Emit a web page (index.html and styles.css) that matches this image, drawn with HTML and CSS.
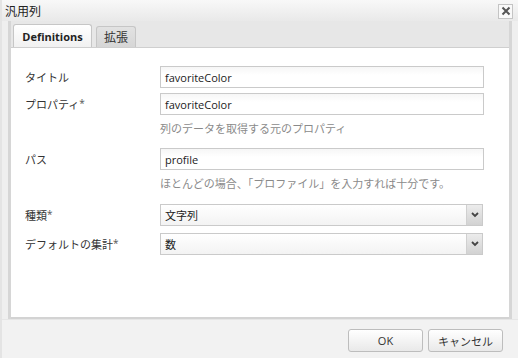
FILE: index.html
```html
<!DOCTYPE html>
<html lang="ja">
<head>
  <meta charset="UTF-8">
  <title>汎用列</title>
  <link rel="stylesheet" href="styles.css">
</head>
<body>

  <div class="window">
    <!-- Title bar -->
    <div class="titlebar">
      <span class="title">汎用列</span>
      <span class="close">
        <svg width="10" height="10" viewBox="0 0 10 10">
          <path d="M1.5 1.5 L8.5 8.5 M8.5 1.5 L1.5 8.5" stroke="#555" stroke-width="2" fill="none"/>
        </svg>
      </span>
    </div>

    <div class="main">
      <!-- Tabs -->
      <div class="tabs">
        <div class="tab active">Definitions</div>
        <div class="tab">拡張</div>
      </div>

      <!-- Form -->
      <div class="panel">
        <div class="row">
          <label class="label">タイトル</label>
          <div class="input">favoriteColor</div>
        </div>
        <div class="row">
          <label class="label">プロパティ<span class="req">*</span></label>
          <div class="input">favoriteColor</div>
        </div>
        <div class="help">列のデータを取得する元のプロパティ</div>
        <div class="row">
          <label class="label">パス</label>
          <div class="input">profile</div>
        </div>
        <div class="help">ほとんどの場合、「プロファイル」を入力すれば十分です。</div>
        <div class="row row-select">
          <label class="label">種類<span class="req">*</span></label>
          <div class="select">
            <span class="value">文字列</span>
            <span class="arrow">
              <svg width="8" height="6" viewBox="0 0 8 6"><path d="M1 1 L4 4 L7 1" stroke="#444" stroke-width="1.8" fill="none"/></svg>
            </span>
          </div>
        </div>
        <div class="row">
          <label class="label">デフォルトの集計<span class="req">*</span></label>
          <div class="select">
            <span class="value">数</span>
            <span class="arrow">
              <svg width="8" height="6" viewBox="0 0 8 6"><path d="M1 1 L4 4 L7 1" stroke="#444" stroke-width="1.8" fill="none"/></svg>
            </span>
          </div>
        </div>
      </div>
    </div>

    <!-- Footer -->
    <div class="footer">
      <button class="btn">OK</button>
      <button class="btn">キャンセル</button>
    </div>
  </div>

</body>
</html>
```

FILE: styles.css
```css
* {
  margin: 0;
  padding: 0;
  box-sizing: border-box;
}

body {
  width: 518px;
  height: 358px;
  overflow: hidden;
  background-color: #f2f2f2;
  font-family: "Open Sans", "Noto Sans CJK JP", sans-serif;
  font-size: 11px;
  color: #333;
}

.window {
  width: 518px;
  height: 358px;
  background-color: #efefef;
  border-left: 2px solid #e4e4e4;
  display: flex;
  flex-direction: column;
}

.titlebar {
  height: 21px;
  display: flex;
  align-items: center;
  justify-content: space-between;
  padding: 0 5px 0 3px;
  background: linear-gradient(#f8f8f8, #e9e9e9);
}

.title {
  font-size: 12px;
  color: #222;
}

.close {
  width: 15px;
  height: 15px;
  margin-top: 1px;
  border: 1px solid #c4c4c4;
  background-color: #f9f9f9;
  display: flex;
  align-items: center;
  justify-content: center;
}

.main {
  margin: 0 6px 0 6px;
  border-left: 3px solid #d6d6d6;
  border-right: 3px solid #d6d6d6;
  display: flex;
  flex-direction: column;
}

.tabs {
  height: 27px;
  display: flex;
  align-items: flex-end;
  gap: 4px;
  padding-left: 2px;
  background-color: #e7e7e7;
  border-bottom: 1px solid #cfcfcf;
}

.tab {
  width: 40px;
  height: 21px;
  display: flex;
  align-items: center;
  justify-content: center;
  border: 1px solid #c6c6c6;
  border-bottom: none;
  border-radius: 3px 3px 0 0;
  background: linear-gradient(#e2e2e2, #d6d6d6);
  color: #333;
  font-size: 12px;
}

.tab.active {
  width: 79px;
  height: 23px;
  background: linear-gradient(#ffffff, #f1f1f1);
  font-size: 11px;
  font-weight: bold;
  color: #222;
}

.panel {
  height: 271px;
  background-color: #ffffff;
  padding: 18px 0 0 14px;
  border-bottom: 2px solid #d3d3d3;
}

.row {
  display: flex;
  align-items: center;
  margin-bottom: 5px;
}

.label {
  width: 135px;
  color: #333;
}

.req {
  font-size: 10px;
  vertical-align: top;
  color: #555;
}

.input {
  width: 324px;
  height: 22px;
  padding: 0 4px;
  display: flex;
  align-items: center;
  border: 1px solid #cacaca;
  background: linear-gradient(#f6f6f6, #ffffff 40%);
  color: #222;
}

.help {
  height: 28px;
  padding: 2px 0 0 135px;
  line-height: 14px;
  color: #8a8a8a;
}

.row-select {
  margin-top: 1px;
  margin-bottom: 7px;
}

.select {
  width: 323px;
  height: 22px;
  display: flex;
  border: 1px solid #cacaca;
  background: linear-gradient(#ffffff, #f3f3f3);
}

.select .value {
  flex: 1;
  padding-left: 4px;
  display: flex;
  align-items: center;
  color: #222;
}

.select .arrow {
  width: 16px;
  display: flex;
  align-items: center;
  justify-content: center;
  border-left: 1px solid #d0d0d0;
  background: linear-gradient(#ececec, #d2d2d2);
}

.footer {
  flex: 1;
  display: flex;
  justify-content: flex-end;
  align-items: flex-start;
  gap: 5px;
  padding: 9px 15px 0 0;
  background-color: #f2f2f2;
  border-top: 1px solid #e6e6e6;
}

.btn {
  width: 75px;
  height: 23px;
  border: 1px solid #bdbdbd;
  border-radius: 3px;
  background: linear-gradient(#ffffff, #e9e9e9);
  font-family: "Open Sans", "Noto Sans CJK JP", sans-serif;
  font-size: 11px;
  color: #333;
}
```
